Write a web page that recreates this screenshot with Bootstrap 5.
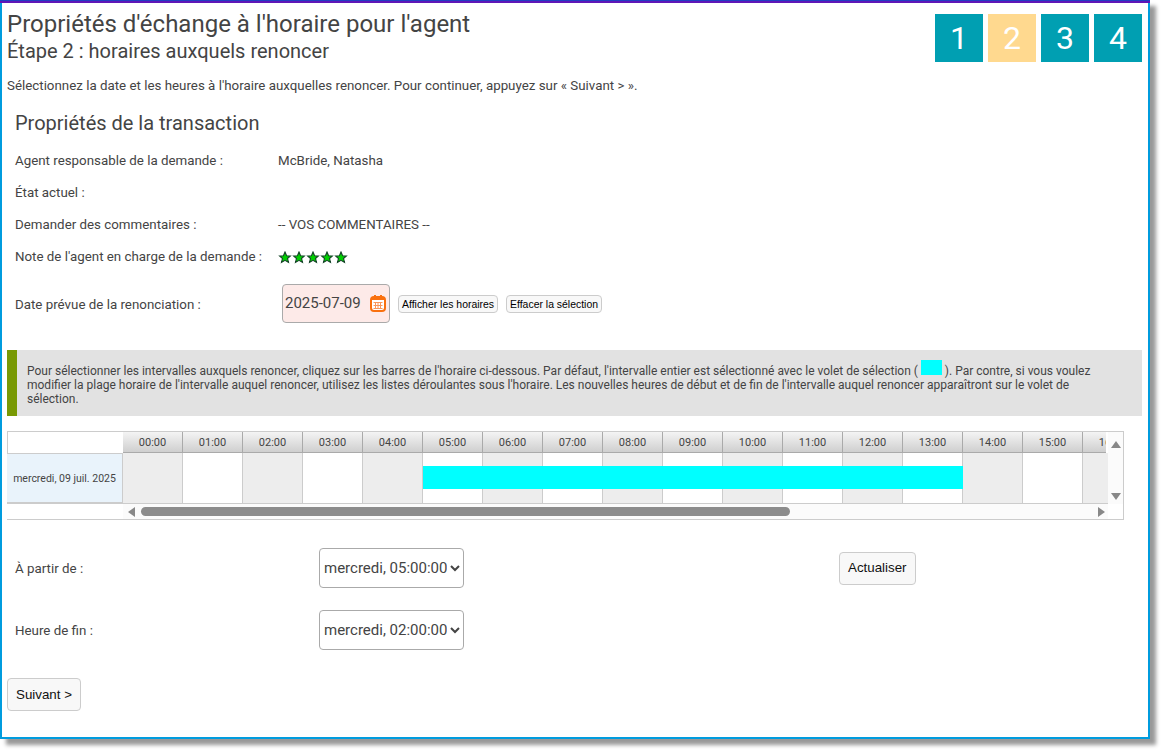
<!DOCTYPE html>
<html lang="fr">
<head>
  <meta charset="UTF-8" />
  <meta name="viewport" content="width=device-width, initial-scale=1" />
  <title>Propriétés d'échange</title>
  <link href="https://cdn.jsdelivr.net/npm/bootstrap@5.3.0/dist/css/bootstrap.min.css" rel="stylesheet" />
  <style>
    html, body { margin: 0; background: #fff; }
    body { font-family: Roboto, "Liberation Sans", sans-serif; font-size: 13.33px; color: #444; width: 1164px; height: 753px; overflow: hidden; }
    .cadre { width: 1150px; height: 739px; border: 2px solid #009cde; border-top: 0; box-shadow: 6px 6px 4px #999; background: #fff; }
    .bande { height: 3px; margin: 0 -2px; background: #5f16b8; border-top: 1px solid #1f3fc0; }
    .zone-page { padding: 0 5px; }
    .entete { height: 65px; padding-top: 7px; }
    .titre-page { font-size: 24px; line-height: 28px; margin: 0; font-weight: 400; color: #444; }
    .sous-titre { font-size: 20px; line-height: 26px; margin: 0; font-weight: 400; color: #444; }
    .etapes { padding-top: 4px; padding-right: 1px; gap: 5px; }
    .etape { width: 48px; height: 48px; background: #009fb2; color: #fff; font-size: 32px; line-height: 48px; text-align: center; }
    .etape-active { background: #ffd98f; }
    .consigne { margin: 10px 0 0; line-height: 16px; }
    .bloc-transaction { padding: 0 8px; margin-top: 16px; }
    .titre-bloc { font-size: 20px; line-height: 26px; margin: 0 0 9px; font-weight: 400; color: #444; }
    .ligne-champ { height: 32px; }
    .nom-champ { width: 263px; flex-shrink: 0; }
    .ligne-date { height: 64px; }
    .champ-date { width: 108px; height: 39px; margin: 0 0 4px 4px; background: #fdeae8; border: 1px solid #aaa; border-radius: 4px; font-size: 15px; padding: 1px 2px 0 2px; color: #444; }
    .icone-cal { margin-right: 1px; }
    .petit-bouton { font-family: "Liberation Sans", sans-serif; font-size: 10.45px; height: 18px; line-height: 15px; padding: 0 3px; background: #f8f8f8; border: 1px solid #ccc; border-radius: 4px; color: #000; margin: 0 0 2px 8px; white-space: nowrap; }
    .note-info { margin-top: 13px; margin-right: 1px; height: 66px; background: #e2e2e2; border-left: 10px solid #789904; padding: 14px 40px 0 10px; font-size: 12px; line-height: 14px; }
    .temoin { display: inline-block; width: 21px; height: 15px; margin-top: -4px; background: #0ff; vertical-align: top; }
    .horaire { margin-top: 15px; width: 1117px; height: 89px; border: 1px solid #ccc; border-left: 0; }
    .col-dates { width: 116px; flex-shrink: 0; }
    .case-vide { height: 21px; background: #fff; border-left: 1px solid #ccc; }
    .case-date { height: 51px; background: #e9f3fb; border: 1px solid #ccc; border-width: 1px 1px 2px 0; font-size: 10.5px; line-height: 50px; text-align: center; white-space: nowrap; }
    .piste { width: 985px; position: relative; overflow: hidden; flex-shrink: 0; }
    .rang-heures { height: 21px; width: 983px; overflow: hidden; }
    .heure { width: 60px; flex-shrink: 0; height: 21px; text-align: center; font-size: 11px; line-height: 22px; border-right: 1px solid #aaa; border-bottom: 1px solid #aaa; background: linear-gradient(#f4f4f4, #cfcfcf); overflow: hidden; }
    .rang-cases { height: 51px; border-bottom: 1px solid #ccc; }
    .case-h { width: 60px; flex-shrink: 0; border-right: 1px solid #ccc; }
    .case-paire { background: #ededed; }
    .barre-cyan { position: absolute; left: 300px; top: 34px; width: 540px; height: 23px; background: #0ff; }
    .asc-h { width: 985px; height: 15px; background: #fbfbfb; position: relative; }
    .asc-poignee { position: absolute; left: 18px; top: 3px; width: 649px; height: 9px; border-radius: 5px; background: #8c8c8c; }
    .asc-v { width: 16px; height: 72px; background: #fbfbfb; padding-top: 5px; }
    .fl-h { width: 0; height: 0; border-left: 5px solid transparent; border-right: 5px solid transparent; border-bottom: 7px solid #888; }
    .fl-b { width: 0; height: 0; border-left: 5px solid transparent; border-right: 5px solid transparent; border-top: 7px solid #888; }
    .fl-g, .fl-d { position: absolute; top: 3px; width: 0; height: 0; border-top: 5px solid transparent; border-bottom: 5px solid transparent; }
    .fl-g { left: 5px; border-right: 7px solid #888; }
    .fl-d { right: 3px; border-left: 7px solid #888; }
    .espace-listes { height: 17px; }
    .ligne-liste { height: 62px; padding-left: 8px; }
    .nom-liste { width: 304px; flex-shrink: 0; padding-top: 1px; }
    .liste-heure { width: 145px; height: 40px; font-size: 15px; font-family: Roboto, sans-serif; border: 1px solid #aaa; border-radius: 4px; background: #fff; color: #444; padding: 0; }
    .gros-bouton { font-family: "Liberation Sans", sans-serif; font-size: 13.33px; background: #f8f8f8; border: 1px solid #ccc; border-radius: 4px; color: #111; height: 33px; padding: 0 8px; }
    #btnActualiser { margin-left: 375px; }
    #btnSuivant { margin-top: 17px; }
  </style>
</head>
<body>

  <div class="cadre">
    <div class="bande"></div>
    <div class="zone-page">

      <!-- Entete -->
      <div class="entete d-flex justify-content-between">
        <div>
          <h1 class="titre-page">Propriétés d'échange à l'horaire pour l'agent</h1>
          <h2 class="sous-titre">Étape 2 : horaires auxquels renoncer</h2>
        </div>
        <div class="etapes d-flex">
          <div class="etape">1</div>
          <div class="etape etape-active">2</div>
          <div class="etape">3</div>
          <div class="etape">4</div>
        </div>
      </div>

      <p class="consigne">Sélectionnez la date et les heures à l'horaire auxquelles renoncer. Pour continuer, appuyez sur « Suivant &gt; ».</p>

      <!-- Proprietes -->
      <div class="bloc-transaction">
        <h3 class="titre-bloc">Propriétés de la transaction</h3>
        <div class="ligne-champ d-flex align-items-center"><div class="nom-champ">Agent responsable de la demande :</div><div>McBride, Natasha</div></div>
        <div class="ligne-champ d-flex align-items-center"><div class="nom-champ">État actuel :</div></div>
        <div class="ligne-champ d-flex align-items-center"><div class="nom-champ">Demander des commentaires :</div><div>-- VOS COMMENTAIRES --</div></div>
        <div class="ligne-champ d-flex align-items-center">
          <div class="nom-champ">Note de l'agent en charge de la demande :</div>
          <svg width="72" height="13" viewBox="0 0 72 13">
            <defs><polygon id="etoile" points="7,1 8.6,4.7 12.4,5 9.5,7.5 10.5,11.4 7,9.3 3.5,11.4 4.5,7.5 1.6,5 5.4,4.7" fill="#00d000" stroke="#17452a" stroke-width="1.1"/></defs>
            <use href="#etoile" x="0"/><use href="#etoile" x="14"/><use href="#etoile" x="28"/><use href="#etoile" x="42"/><use href="#etoile" x="56"/>
          </svg>
        </div>
        <div class="ligne-date d-flex align-items-center">
          <div class="nom-champ">Date prévue de la renonciation :</div>
          <div class="champ-date d-flex align-items-center">
            <span>2025-07-09</span>
            <svg class="ms-auto icone-cal" width="16" height="17" viewBox="0 0 16 17">
              <rect x="1" y="2" width="14" height="14" rx="3" fill="#fff" stroke="#f9700e" stroke-width="2"/>
              <rect x="1" y="2" width="14" height="3" fill="#f9700e"/>
              <rect x="4" y="0" width="2" height="3" fill="#f9700e"/><rect x="10" y="0" width="2" height="3" fill="#f9700e"/>
              <path d="M3.5 7.5h9M3.5 10.5h9M3.5 13.5h9M5.5 7v7M8 7v7M10.5 7v7" stroke="#f9965a" stroke-width="1"/>
            </svg>
          </div>
          <button type="button" class="petit-bouton">Afficher les horaires</button>
          <button type="button" class="petit-bouton">Effacer la sélection</button>
        </div>
      </div>

      <div class="note-info">Pour sélectionner les intervalles auxquels renoncer, cliquez sur les barres de l'horaire ci-dessous. Par défaut, l'intervalle entier est sélectionné avec le volet de sélection ( <span class="temoin"></span> ). Par contre, si vous voulez modifier la plage horaire de l'intervalle auquel renoncer, utilisez les listes déroulantes sous l'horaire. Les nouvelles heures de début et de fin de l'intervalle auquel renoncer apparaîtront sur le volet de sélection.</div>

      <!-- Horaire -->
      <div class="horaire d-flex">
        <div class="col-dates">
          <div class="case-vide"></div>
          <div class="case-date">mercredi, 09 juil. 2025</div>
        </div>
        <div class="piste">
          <div class="rang-heures d-flex" id="rangHeures"></div>
          <div class="rang-cases d-flex" id="rangCases"></div>
          <div class="barre-cyan"></div>
          <div class="asc-h"><span class="fl-g"></span><div class="asc-poignee"></div><span class="fl-d"></span></div>
        </div>
        <div class="asc-v d-flex flex-column align-items-center justify-content-between">
          <div class="fl-h mt-1"></div>
          <div class="fl-b mb-1"></div>
        </div>
      </div>

      <!-- Listes -->
      <div class="espace-listes"></div>
      <div class="ligne-liste d-flex align-items-center">
        <div class="nom-liste">À partir de :</div>
        <select class="liste-heure"><option>mercredi, 05:00:00</option></select>
        <button type="button" class="gros-bouton" id="btnActualiser">Actualiser</button>
      </div>
      <div class="ligne-liste d-flex align-items-center">
        <div class="nom-liste">Heure de fin :</div>
        <select class="liste-heure"><option>mercredi, 02:00:00</option></select>
      </div>
      <button type="button" class="gros-bouton" id="btnSuivant">Suivant &gt;</button>

    </div>
  </div>

  <script src="https://cdn.jsdelivr.net/npm/bootstrap@5.3.0/dist/js/bootstrap.bundle.min.js"></script>
  <script>
    const rangHeures = document.getElementById("rangHeures");
    const rangCases = document.getElementById("rangCases");
    for (let h = 0; h < 17; h++) {
      const label = h < 10 ? "0" + h + ":00" : h + ":00";
      rangHeures.insertAdjacentHTML("beforeend", `<div class="heure">${label}</div>`);
      rangCases.insertAdjacentHTML("beforeend", `<div class="case-h ${h % 2 === 0 ? "case-paire" : ""}"></div>`);
    }
  </script>
</body>
</html>
